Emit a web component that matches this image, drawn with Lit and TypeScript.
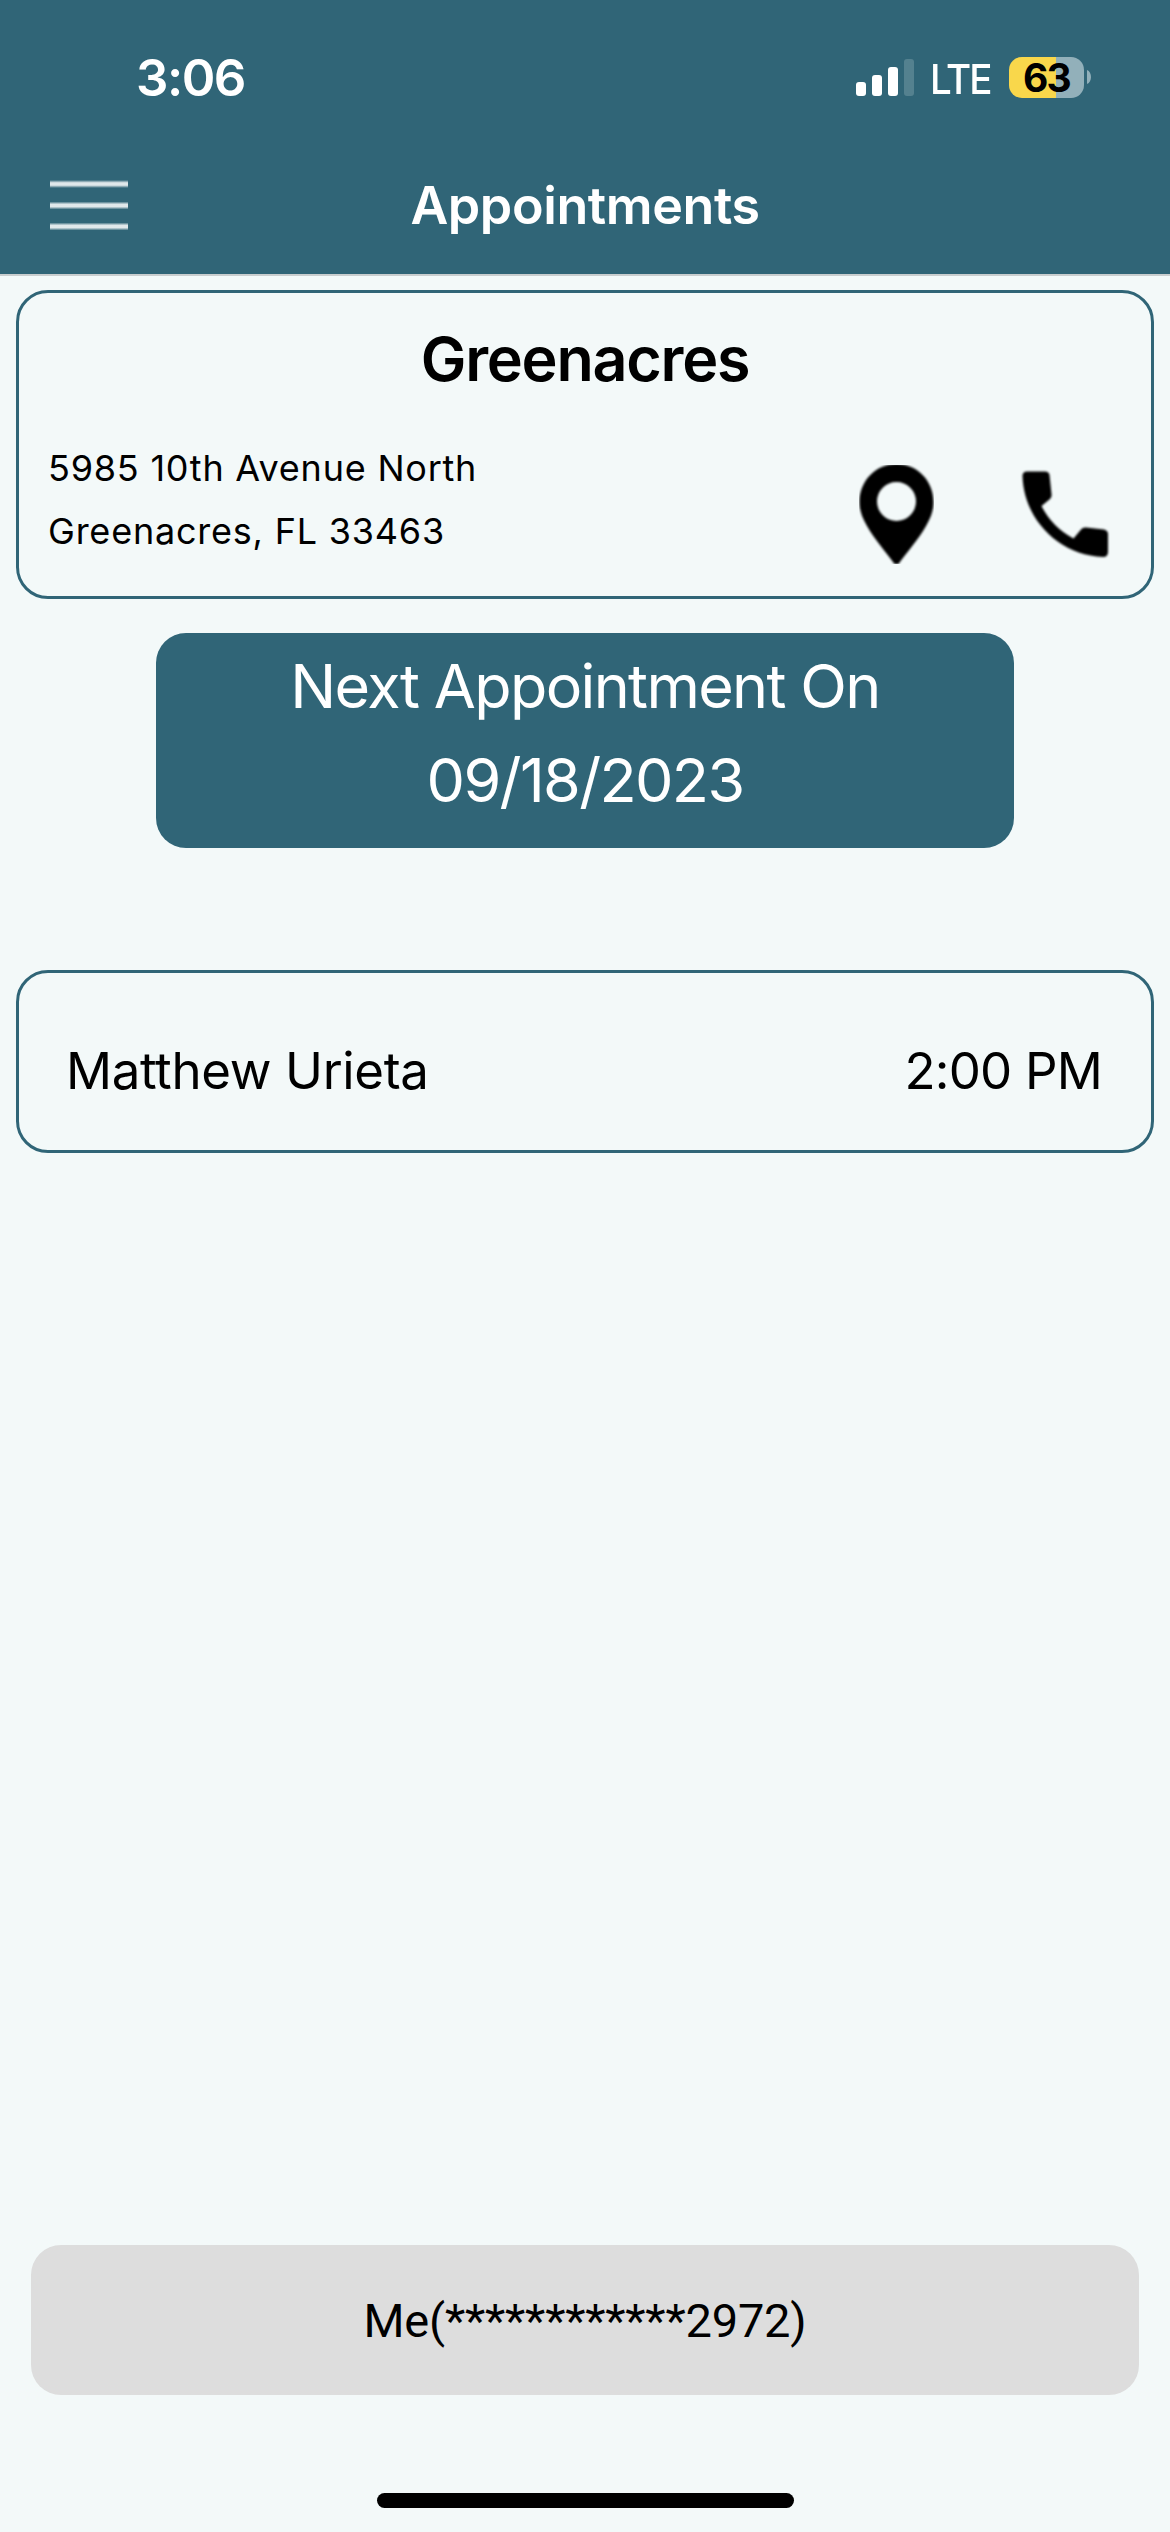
import { LitElement, html, css } from "lit";
import { customElement } from "lit/decorators.js";

@customElement("app-root")
export class AppRoot extends LitElement {
  static styles = css`
    :host {
      display: flex;
      flex-direction: column;
      box-sizing: border-box;
      width: 1170px;
      height: 2532px;
      background: #f3f9f9;
      color: #000;
      font-family: Inter, "Liberation Sans", sans-serif;
      overflow: hidden;
    }
    * { box-sizing: border-box; }
    .header {
      flex: none;
      height: 276px;
      background: #306577;
      border-bottom: 2px solid #c9cecf;
      color: #fff;
    }
    .status {
      display: flex;
      justify-content: space-between;
      height: 156px;
      padding: 48px 79px 0 136px;
    }
    .clock { font-size: 51px; font-weight: 600; line-height: 60px; letter-spacing: -1.5px; }
    .indicators { display: flex; height: 60px; }
    .signal { display: block; width: 58px; height: 60px; }
    .lte {
      margin-left: 16px;
      width: 63px;
      font-size: 41px;
      font-weight: 500;
      line-height: 62px;
      letter-spacing: -2.2px;
      transform: scaleX(0.94);
      transform-origin: 0 50%;
    }
    .battery {
      display: flex;
      align-items: center;
      justify-content: center;
      margin: 9px 0 0 16px;
      width: 75px;
      height: 41px;
      border-radius: 13px;
      background: linear-gradient(to right, #f9d74b 47px, #92b0ba 47px);
      color: #000;
      font-size: 39px;
      font-weight: 700;
      letter-spacing: -1.8px;
    }
    .nub { display: block; width: 4px; height: 14px; margin: 22px 0 0 3px; }
    .nav {
      display: grid;
      grid-template-columns: 78px 1fr 78px;
      align-items: center;
      height: 100px;
      padding: 0 50px;
    }
    .menu { display: block; width: 78px; height: 60px; }
    .title { text-align: center; font-size: 52px; font-weight: 600; line-height: 64px; letter-spacing: -0.4px; }
    .main { display: flex; flex-direction: column; flex: 1; padding: 14px 16px 0; }
    .card { border: 3px solid #306577; border-radius: 32px; }
    .office { height: 309px; padding: 31px 29px 0; }
    .office-name { text-align: center; font-size: 61px; font-weight: 600; line-height: 70px; letter-spacing: -1.25px; }
    .office-row { display: flex; justify-content: space-between; margin-top: 42px; padding-right: 14px; }
    .address { padding-top: 1px; font-size: 36px; line-height: 63px; letter-spacing: 0.78px; }
    .contact { display: flex; gap: 88px; padding-top: 29px; }
    .pin { display: block; width: 75px; height: 99px; }
    .phone { display: block; width: 86px; height: 86px; margin-top: 6px; overflow: visible; }
    .soft { filter: blur(0.8px); }
    .next {
      align-self: center;
      width: 858px;
      height: 215px;
      margin-top: 34px;
      padding-top: 7px;
      border-radius: 30px;
      background: #306577;
      color: #fff;
      text-align: center;
      font-size: 61px;
      line-height: 93.5px;
      letter-spacing: -1.65px;
    }
    .visit {
      display: flex;
      align-items: center;
      justify-content: space-between;
      height: 183px;
      margin-top: 122px;
      padding: 18px 49px 0 47px;
      font-size: 51px;
    }
    .patient { letter-spacing: -0.35px; }
    .time { letter-spacing: -0.8px; }
    .account {
      flex: none;
      height: 150px;
      margin: auto 31px 98px;
      border-radius: 30px;
      background: #ddd;
      display: flex;
      align-items: center;
      justify-content: center;
      font-family: Roboto, sans-serif;
      font-size: 47px;
      letter-spacing: -0.2px;
    }
    .home { flex: none; align-self: center; width: 417px; height: 15px; margin-bottom: 24px; border-radius: 8px; background: #000; }
  `;

  render() {
    return html`
      <header class="header">
        <div class="status">
          <span class="clock">3:06</span>
          <div class="indicators">
            <svg class="signal" viewBox="0 0 58 60" fill="#fff">
              <rect x="0" y="34" width="10" height="14" rx="3" />
              <rect x="16" y="27" width="10" height="21" rx="3" />
              <rect x="32" y="19" width="10" height="29" rx="3" />
              <rect x="48" y="11" width="10" height="37" rx="3" fill="#54818f" />
            </svg>
            <span class="lte">LTE</span>
            <span class="battery">63</span>
            <svg class="nub" viewBox="0 0 4 14"><path d="M0 0C5.300 2 5.300 12 0 14Z" fill="#92b0ba" /></svg>
          </div>
        </div>
        <div class="nav">
          <svg class="menu" viewBox="0 0 78 60">
            <defs>
              <linearGradient id="line" x1="0" x2="0" y1="0" y2="1">
                <stop offset="0" stop-color="#fff" stop-opacity="0" />
                <stop offset="0.35" stop-color="#fff" stop-opacity="0.85" />
                <stop offset="0.65" stop-color="#fff" stop-opacity="0.85" />
                <stop offset="1" stop-color="#fff" stop-opacity="0" />
              </linearGradient>
            </defs>
            <rect y="4" width="78" height="8" fill="url(#line)" />
            <rect y="25.500" width="78" height="8" fill="url(#line)" />
            <rect y="46.500" width="78" height="8" fill="url(#line)" />
          </svg>
          <div class="title">Appointments</div>
        </div>
      </header>
      <main class="main">
        <section class="card office">
          <div class="office-name">Greenacres</div>
          <div class="office-row">
            <div class="address">
              <div>5985 10th Avenue North</div>
              <div>Greenacres, FL 33463</div>
            </div>
            <div class="contact">
              <svg class="pin" viewBox="0 0 75 99">
                <path class="soft" fill-rule="evenodd" d="M37.500 -1C16.500 -1 0.500 16 0.500 37C0.500 46 3.500 53 8 61C16 75 27 87 35.500 99H39.500C48 87 59 75 67 61C71.500 53 74.500 46 74.500 37C74.500 16 58.500 -1 37.500 -1ZM37.500 17A19.500 19.500 0 1 1 37.500 56A19.500 19.500 0 1 1 37.500 17Z" />
              </svg>
              <svg class="phone" viewBox="0 0 86 86">
                <path class="soft" d="M5 0.500H23Q27 0.500 27.500 4L29.500 23Q30 26 28 28L19.500 35Q30 56 51.500 67.500L59 58.500Q61 56 64 56.500L82 58.500Q86 59.500 86 63V81Q86 86 81 86C37 84 2 49 0.500 5Q0.500 0.500 5 0.500Z" />
              </svg>
            </div>
          </div>
        </section>
        <section class="next">
          <div>Next Appointment On</div>
          <div>09/18/2023</div>
        </section>
        <section class="card visit">
          <span class="patient">Matthew Urieta</span>
          <span class="time">2:00 PM</span>
        </section>
      </main>
      <div class="account">Me(************2972)</div>
      <div class="home"></div>
    `;
  }
}
